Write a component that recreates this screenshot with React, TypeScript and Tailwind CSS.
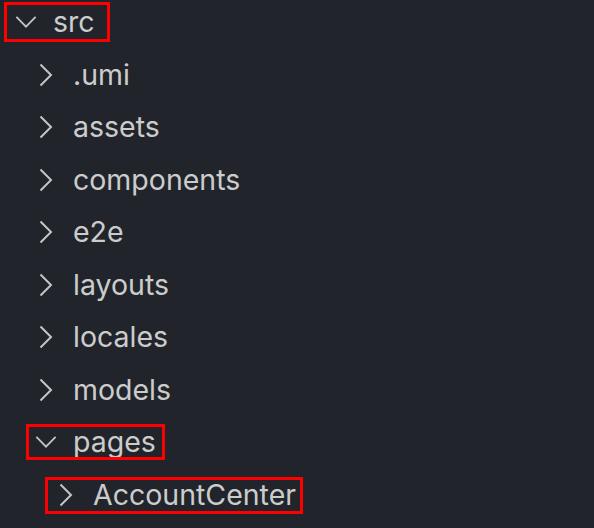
import React from "react";

type Row = { name: string; level: number; open?: boolean; mark?: string };

const rows: Row[] = [
  { name: "src", level: 0, open: true, mark: "-left-[11px] -right-[15px] -top-[6px] -bottom-[6px]" },
  { name: ".umi", level: 1 },
  { name: "assets", level: 1 },
  { name: "components", level: 1 },
  { name: "e2e", level: 1 },
  { name: "layouts", level: 1 },
  { name: "locales", level: 1 },
  { name: "models", level: 1 },
  { name: "pages", level: 1, open: true, mark: "-left-[9px] -right-[9px] -top-[4px] -bottom-[4px]" },
  { name: "AccountCenter", level: 2, mark: "-left-[10px] -right-[7px] -top-[4px] -bottom-[5px]" },
];

function Chevron({ open }: { open?: boolean }) {
  return open ? (
    <svg width="24" height="14" viewBox="0 0 24 14" fill="none" aria-hidden>
      <polyline points="1.5,1.5 12,12 22.5,1.5" stroke="#c5c5c5" strokeWidth="2" />
    </svg>
  ) : (
    <svg width="14" height="24" viewBox="0 0 14 24" fill="none" aria-hidden>
      <polyline points="1.5,1.5 12,12 1.5,22.5" stroke="#c5c5c5" strokeWidth="2" />
    </svg>
  );
}

export default function App() {
  return (
    <div
      className="h-[528px] w-[594px] overflow-hidden bg-[#21252b] text-[#cccccc]"
      style={{ fontFamily: "Inter, 'Liberation Sans', sans-serif" }}
    >
      <ul className="-mt-[4px]">
        {rows.map((r) => (
          <li
            key={r.name}
            className="flex h-[52.5px] items-center"
            style={{ paddingLeft: 15 + r.level * 20 }}
          >
            <span className="relative flex items-center">
              <span className="flex w-[22px] justify-center">
                <Chevron open={r.open} />
              </span>
              <span className="ml-[16px] text-[28.5px] leading-[28px]">{r.name}</span>
              {r.mark && (
                <span className={`absolute border-[3px] border-[#ff0000] ${r.mark}`} />
              )}
            </span>
          </li>
        ))}
      </ul>
    </div>
  );
}
